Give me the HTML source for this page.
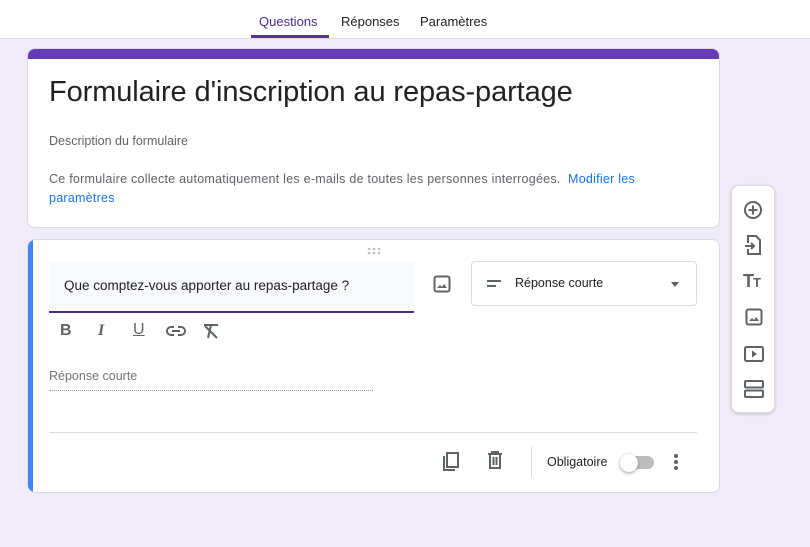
<!DOCTYPE html>
<html><head><style>
*{box-sizing:border-box;margin:0;padding:0}
body{width:810px;height:547px;background:#f0ebf8;font-family:"Liberation Sans",Arial,sans-serif;position:relative;overflow:hidden;color:#202124}
.top{position:absolute;left:0;top:0;width:810px;height:39px;background:#fff;border-bottom:1px solid #dadce0}
.tab{position:absolute;top:14px;font-size:13px;color:#202124}
.card{position:absolute;background:#fff;border-radius:8px;border:1px solid #dadce0}
.ic{position:absolute}
svg{display:block}
</style></head><body>
<div class="top">
 <div class="tab" style="left:259px;color:#4b2b8f">Questions</div>
 <div style="position:absolute;left:251px;top:35px;width:78px;height:3px;background:#5a2f9e"></div>
 <div class="tab" style="left:341px">Réponses</div>
 <div class="tab" style="left:420px">Paramètres</div>
</div>

<div class="card" style="left:27px;top:48px;width:693px;height:180px;overflow:hidden">
 <div style="height:10px;background:#673ab7"></div>
 <div style="position:absolute;left:21px;top:27px;font-size:29px;color:#202124;letter-spacing:-0.1px">Formulaire d'inscription au repas-partage</div>
 <div style="position:absolute;left:21px;top:85px;font-size:12.5px;color:#5f6368">Description du formulaire</div>
 <div style="position:absolute;left:21px;top:121px;width:630px;font-size:12.5px;line-height:19px;color:#5f6368;letter-spacing:0.25px">Ce formulaire collecte automatiquement les e-mails de toutes les personnes interrogées. &nbsp;<span style="color:#1a73e8">Modifier les paramètres</span></div>
</div>

<div class="card" style="left:27px;top:239px;width:693px;height:254px;overflow:hidden">
 <div style="position:absolute;left:0;top:0;width:5px;height:254px;background:#4285f4"></div>
 <svg class="ic" style="left:339px;top:7px" width="14" height="8"><g fill="#bdc1c6"><circle cx="2" cy="2" r="1.3"/><circle cx="7" cy="2" r="1.3"/><circle cx="12" cy="2" r="1.3"/><circle cx="2" cy="6" r="1.3"/><circle cx="7" cy="6" r="1.3"/><circle cx="12" cy="6" r="1.3"/></g></svg>
 <div style="position:absolute;left:21px;top:22px;width:365px;height:51px;background:#f8f9fa;border-bottom:2px solid #4b2b8f"></div>
 <div style="position:absolute;left:36px;top:38px;font-size:13.5px">Que comptez-vous apporter au repas-partage ?</div>
 <div style="position:absolute;left:32px;top:82px;font-size:16px;font-weight:bold;color:#5f6368">B</div>
 <div style="position:absolute;left:70px;top:82px;font-size:16px;font-weight:bold;font-style:italic;color:#5f6368;font-family:'Liberation Serif',serif">I</div>
 <div style="position:absolute;left:105px;top:81px;font-size:16px;color:#5f6368;text-decoration:underline">U</div>
 <svg class="ic" style="left:138px;top:84px" width="20" height="14" viewBox="0 0 20 14"><path d="M8 3H5a4 4 0 0 0 0 8h3M12 3h3a4 4 0 0 1 0 8h-3M6 7h8" stroke="#5f6368" stroke-width="2" fill="none"/></svg>
 <svg class="ic" style="left:174px;top:83px" width="18" height="16" viewBox="0 0 18 16"><path d="M2 2h14M9 2l-3 13M3 3l12 12" stroke="#5f6368" stroke-width="2" fill="none"/></svg>
 <div style="position:absolute;left:21px;top:129px;font-size:12.5px;color:#70757a">Réponse courte</div>
 <div style="position:absolute;left:21px;top:150px;width:324px;border-top:1px dotted #9aa0a6"></div>
 <svg class="ic" style="left:405px;top:35px" width="18" height="18" viewBox="0 0 18 18"><rect x="1.5" y="1.5" width="15" height="15" rx="2" fill="none" stroke="#5f6368" stroke-width="2"/><path d="M4 13l3-3 2 2 2-3 3 4z" fill="#5f6368"/></svg>
 <div style="position:absolute;left:443px;top:21px;width:226px;height:45px;border:1px solid #dadce0;border-radius:4px"></div>
 <div style="position:absolute;left:459px;top:40px;width:14px;height:2px;background:#5f6368"></div>
 <div style="position:absolute;left:459px;top:45px;width:9px;height:2px;background:#5f6368"></div>
 <div style="position:absolute;left:487px;top:36px;font-size:12.5px">Réponse courte</div>
 <div style="position:absolute;left:643px;top:42px;border:4px solid transparent;border-top:5px solid #5f6368"></div>
 <div style="position:absolute;left:21px;top:192px;width:648px;border-top:1px solid #dadce0"></div>
 <svg class="ic" style="left:414px;top:211px" width="18" height="20" viewBox="0 0 18 20"><path d="M5 4V2h11v14H5zM2 5v14h11" fill="none" stroke="#5f6368" stroke-width="2"/></svg>
 <svg class="ic" style="left:459px;top:211px" width="16" height="18" viewBox="0 0 16 18"><path d="M1 3h14M5 3V1h6v2M3 3v14h10V3M6.5 6v8M9.5 6v8" fill="none" stroke="#5f6368" stroke-width="2"/></svg>
 <div style="position:absolute;left:503px;top:207px;width:1px;height:30px;background:#dadce0"></div>
 <div style="position:absolute;left:519px;top:215px;font-size:12.5px">Obligatoire</div>
 <div style="position:absolute;left:596px;top:216px;width:30px;height:13px;border-radius:7px;background:#bdbdbd"></div>
 <div style="position:absolute;left:592px;top:214px;width:18px;height:18px;border-radius:50%;background:#fff;box-shadow:0 1px 3px rgba(0,0,0,.4)"></div>
 <svg class="ic" style="left:645px;top:213px" width="6" height="18"><g fill="#5f6368"><circle cx="3" cy="3" r="2"/><circle cx="3" cy="9" r="2"/><circle cx="3" cy="15" r="2"/></g></svg>
</div>

<div class="card" style="left:731px;top:185px;width:44px;height:228px;box-shadow:0 1px 3px rgba(0,0,0,.2)">
 <svg class="ic" style="left:11px;top:14px" width="20" height="20" viewBox="0 0 20 20"><circle cx="10" cy="10" r="8" fill="none" stroke="#5f6368" stroke-width="2"/><path d="M10 5.5v9M5.5 10h9" stroke="#5f6368" stroke-width="2"/></svg>
 <svg class="ic" style="left:13px;top:49px" width="16" height="20" viewBox="0 0 16 20"><path d="M3 8V1h8l4 4v14H3v-5" fill="none" stroke="#5f6368" stroke-width="2"/><path d="M0 11h9M6 8l3 3-3 3" fill="none" stroke="#5f6368" stroke-width="2"/></svg>
 <div style="position:absolute;left:11px;top:85px;font-size:18px;font-weight:bold;color:#5f6368;letter-spacing:-1px">T<span style="font-size:13px">T</span></div>
 <svg class="ic" style="left:13px;top:122px" width="18" height="18" viewBox="0 0 18 18"><rect x="1.5" y="1.5" width="15" height="15" rx="2" fill="none" stroke="#5f6368" stroke-width="2"/><path d="M4 13l3-3 2 2 2-3 3 4z" fill="#5f6368"/></svg>
 <svg class="ic" style="left:12px;top:160px" width="20" height="16" viewBox="0 0 20 16"><rect x="1" y="1" width="18" height="14" rx="1.5" fill="none" stroke="#5f6368" stroke-width="2"/><path d="M8 4.5v7l5-3.5z" fill="#5f6368"/></svg>
 <svg class="ic" style="left:12px;top:194px" width="20" height="18" viewBox="0 0 20 18"><rect x="1" y="1" width="18" height="6.5" rx="1" fill="none" stroke="#5f6368" stroke-width="2"/><rect x="1" y="10.5" width="18" height="6.5" rx="1" fill="none" stroke="#5f6368" stroke-width="2"/></svg>
</div>
</body></html>
